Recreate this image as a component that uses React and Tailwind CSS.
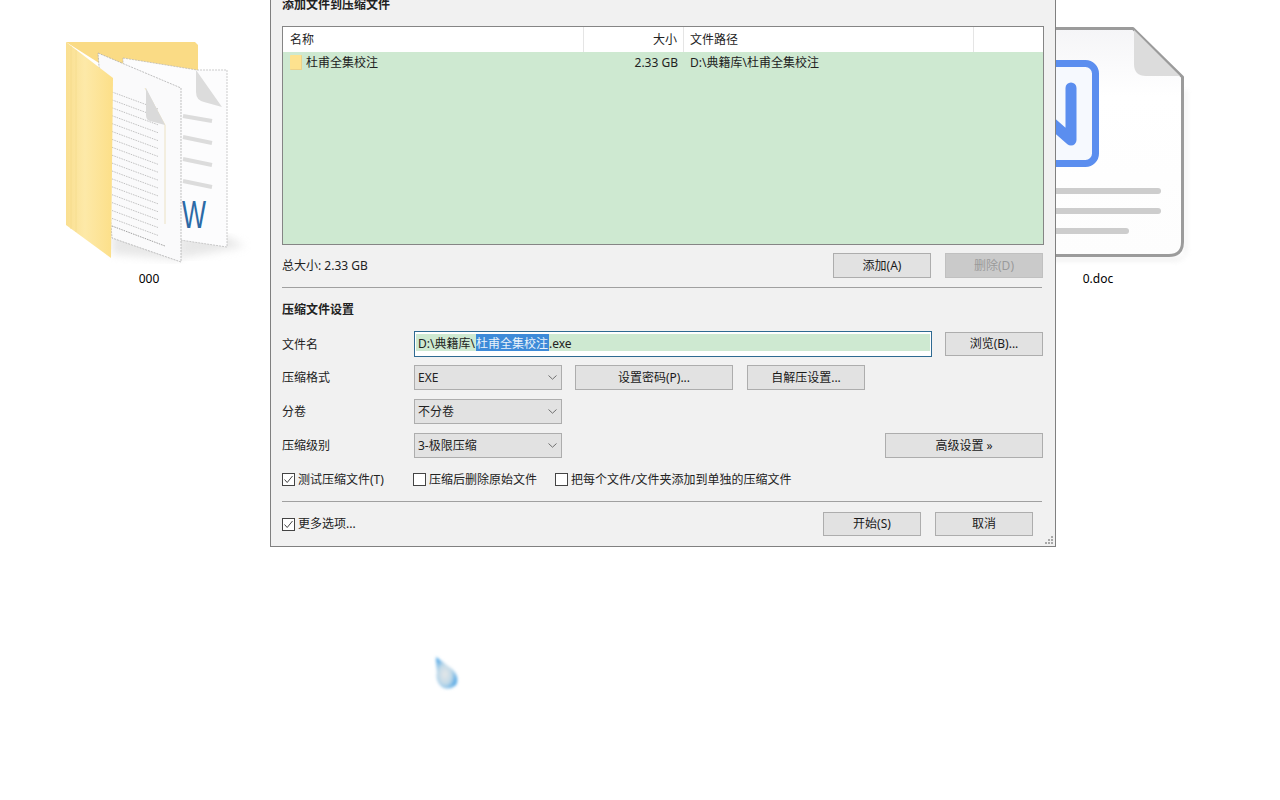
const Btn = ({ children, w, h = "h-[25px]", disabled }) => (
  <div className={`${w} ${h} shrink-0 flex items-center justify-center border ${disabled ? "bg-[#cacaca] border-[#c0c0c0] text-[#9a9a9a]" : "bg-[#e2e2e2] border-[#adadad] text-[#1a1a1a]"}`}>
    {children}
  </div>
);

const Select = ({ children }) => (
  <div className="w-[148px] h-[25px] shrink-0 flex items-center justify-between pl-[3px] pr-[4px] bg-[#e2e2e2] border border-[#adadad]">
    <span>{children}</span>
    <svg width="9" height="5" viewBox="0 0 9 5" fill="none" stroke="#6f6f6f" strokeWidth="1"><path d="M0.5 0.5 L4.500 4.200 L8.500 0.5" /></svg>
  </div>
);

const Check = ({ checked, children, w }) => (
  <div className={`${w} shrink-0 flex items-center gap-[3px]`}>
    <div className="w-[13px] h-[13px] bg-white border border-[#444] flex items-center justify-center">
      {checked && (
        <svg width="11" height="11" viewBox="0 0 11 11" fill="none" stroke="#444" strokeWidth="1"><path d="M1.5 5.5 L4.2 8.5 L9.5 2" /></svg>
      )}
    </div>
    <span>{children}</span>
  </div>
);

const Row = ({ label, mt, children, h = "h-[25px]", labelClass = "" }) => (
  <div className={`flex items-center ${h} ${mt}`}>
    <div className={`w-[132px] shrink-0 ${labelClass}`}>{label}</div>
    {children}
  </div>
);

const FolderIcon = () => (
  <svg className="absolute left-[60px] top-[36px]" width="200" height="240" viewBox="60 36 200 240">
    <defs>
      <linearGradient id="fr" x1="0" y1="0" x2="1" y2="0">
        <stop offset="0" stopColor="#fadf90" />
        <stop offset="0.4" stopColor="#fde9a8" />
        <stop offset="1" stopColor="#fcdf88" />
      </linearGradient>
      <filter id="sh"><feGaussianBlur stdDeviation="4" /></filter>
    </defs>
    <path d="M182 258 L245 246 L225 236 L182 236 Z" fill="#cfcfcf" opacity="0.5" filter="url(#sh)" />
    <path d="M112 254 L181 260 L181 232 L112 228 Z" fill="#c4c4c4" opacity="0.4" filter="url(#sh)" />
    <path d="M66 42 L195 42 L198 45 L198 70 L110 70 Z" fill="#fadb85" />
    <path d="M123 58 L197 70 L227 70 L227 247 L180 240 L123 240 Z" fill="#fcfcfd" stroke="#b5b5b5" strokeWidth="0.7" strokeDasharray="2 1" />
    <path d="M196 70 L222 107 L204 102 Q196 100 196 92 Z" fill="#dcdcdc" />
    <g stroke="#dcdcdc" strokeWidth="4">
      <path d="M183 116 L212 121" /><path d="M183 137 L212 143" /><path d="M183 159 L212 165" /><path d="M183 181 L212 187" />
    </g>
    <text x="182" y="228" fontFamily="Liberation Sans, sans-serif" fontSize="39" textLength="24" lengthAdjust="spacingAndGlyphs" fill="#2c6aa6">W</text>
    <path d="M98 53 L181 88 L181 262 L112 238 Z" fill="#fafafb" stroke="#a5a5a5" strokeWidth="0.7" strokeDasharray="2 1" />
    <g stroke="#a8a8a8" strokeWidth="0.7" strokeDasharray="1.5 1">
      {Array.from({ length: 17 }, (_, i) => (
        <path key={i} d={`M112 ${92 + i * 7.9} L158 ${109 + i * 7.9}`} />
      ))}
      <path d="M112 226 L165 246" stroke="#777" />
    </g>
    <path d="M145 88 L165 125 L165 224" fill="none" stroke="#e8dcb8" strokeWidth="0.8" />
    <path d="M146 88 L165 125 L150 121 Q146 120 146 115 Z" fill="#dadada" />
    <path d="M66 42 L113 78 L111 258 L66 225 Z" fill="url(#fr)" />
    <path d="M71 46 L71 229 M76 50 L76 232" stroke="#f6dc8e" strokeWidth="0.8" />
  </svg>
);

const DocIcon = () => (
  <svg className="absolute left-[1000px] top-[20px]" width="200" height="250" viewBox="1000 20 200 250">
    <defs>
      <linearGradient id="pg" x1="0" y1="0" x2="0" y2="1">
        <stop offset="0" stopColor="#f5f5f7" />
        <stop offset="0.3" stopColor="#ffffff" />
        <stop offset="1" stopColor="#fdfdfd" />
      </linearGradient>
      <filter id="sd"><feGaussianBlur stdDeviation="2.5" /></filter>
    </defs>
    <path d="M1005 261 L1174 261 Q1187 261 1187 248 L1187 90 L1184 90 L1184 257 L1005 257 Z" fill="#d0d0d0" opacity="0.35" filter="url(#sd)" />
    <path d="M1005 28.5 L1133 28.5 L1182.5 77 L1182.5 242 Q1182.5 255.500 1169 255.500 L1005 255.500 Z" fill="url(#pg)" stroke="#9b9b9b" strokeWidth="3" strokeLinejoin="round" />
    <path d="M1134 30 L1180 76 L1146 76 Q1134 76 1134 64 Z" fill="#dcdcdc" />
    <rect x="1010" y="63.500" width="85.500" height="100" rx="10" fill="#f6f9fe" stroke="#5b8eef" strokeWidth="7" />
    <path d="M1071 88 L1071 140 L1030 104" fill="none" stroke="#5b8eef" strokeWidth="11" strokeLinecap="round" strokeLinejoin="round" />
    <g stroke="#cdcdcd" strokeWidth="6" strokeLinecap="round">
      <path d="M1040 191 L1158 191" />
      <path d="M1040 211 L1158 211" />
      <path d="M1040 231 L1126 231" />
    </g>
  </svg>
);

export default function App() {
  return (
    <div className="relative w-[1280px] h-[800px] overflow-hidden bg-white text-[12px] leading-none text-[#222] font-['Noto_Sans','Noto_Sans_CJK_SC',sans-serif]">
      <FolderIcon />
      <DocIcon />
      <div className="absolute left-[100px] w-[98px] top-[273px] text-center text-black">000</div>
      <div className="absolute left-[1049px] w-[98px] top-[273px] text-center text-black">0.doc</div>

      <svg className="absolute left-[428px] top-[650px]" width="40" height="46" viewBox="428 650 40 46">
        <defs>
          <filter id="dr" x="-30%" y="-30%" width="160%" height="160%"><feGaussianBlur stdDeviation="1.4" /></filter>
          <radialGradient id="dg" cx="0.42" cy="0.55" r="0.6">
            <stop offset="0" stopColor="#e4e6e8" />
            <stop offset="0.5" stopColor="#c4dbe8" />
            <stop offset="1" stopColor="#3f9fe4" />
          </radialGradient>
        </defs>
        <path d="M436 657 L452 669 Q460 677 456 685 Q449 691 442 687 Q435 681 437 672 Z" fill="url(#dg)" filter="url(#dr)" />
      </svg>

      <div className="absolute left-[270px] top-[-9px] w-[786px] flex flex-col bg-[#f1f1f1] border border-[#808080] pl-[11px] pr-[11px] pb-[10px]">
        <div className="h-[26px] flex items-center font-bold">添加文件到压缩文件</div>

        <div className="mt-[8px] h-[219px] flex flex-col border border-[#858585]">
          <div className="h-[25px] flex items-center bg-white">
            <div className="w-[301px] h-full pl-[7px] flex items-center border-r border-[#e5e5e5]">名称</div>
            <div className="w-[100px] h-full pr-[6px] flex items-center justify-end border-r border-[#e5e5e5]">大小</div>
            <div className="w-[290px] h-full pl-[6px] flex items-center border-r border-[#e5e5e5]">文件路径</div>
          </div>
          <div className="flex-1 bg-[#cee9d1]">
            <div className="h-[21px] flex items-center">
              <div className="w-[301px] pl-[7px] flex items-center gap-[4px]">
                <div className="w-[12px] h-[15px] bg-[#fde28f] rounded-[1px] border-r border-b border-[#ecd28a]" />
                <span>杜甫全集校注</span>
              </div>
              <div className="w-[100px] pr-[6px] text-right">2.33 GB</div>
              <div className="pl-[6px]">D:\典籍库\杜甫全集校注</div>
            </div>
          </div>
        </div>

        <div className="mt-[8px] h-[25px] flex items-center gap-[14px] pr-[1px]">
          <div className="mr-auto">总大小: 2.33 GB</div>
          <Btn w="w-[98px]">添加(A)</Btn>
          <Btn w="w-[98px]" disabled>删除(D)</Btn>
        </div>

        <div className="mt-[9px] h-px mr-[2px] bg-[#a0a0a0]" />

        <div className="mt-[12px] h-[20px] flex items-center font-bold">压缩文件设置</div>

        <Row label="文件名" mt="mt-[11px]" h="h-[26px]" labelClass="pt-px">
          <div className="w-[518px] h-[26px] shrink-0 border border-[#2f6a92] bg-white pt-[2px] pl-[1px] pr-[1px] mr-[13px]">
            <div className="h-[17px] bg-[#cee9d1] flex items-center pl-[2px] whitespace-nowrap">
              <span className="h-[17px] flex items-center pt-[2px]">D:\典籍库\</span>
              <span className="ml-px pr-px pt-[2px] bg-[#3d8ad8] text-[#e8f2fb] h-[17px] flex items-center">杜甫全集校注</span>
              <span className="h-[17px] flex items-center pt-[2px]">.exe</span>
            </div>
          </div>
          <Btn w="w-[98px]" h="h-[24px]">浏览(B)...</Btn>
        </Row>

        <Row label="压缩格式" mt="mt-[8px]">
          <Select>EXE</Select>
          <div className="ml-[13px]"><Btn w="w-[158px]">设置密码(P)...</Btn></div>
          <div className="ml-[14px]"><Btn w="w-[118px]">自解压设置...</Btn></div>
        </Row>

        <Row label="分卷" mt="mt-[9px]">
          <Select>不分卷</Select>
        </Row>

        <Row label="压缩级别" mt="mt-[9px]">
          <Select>3-极限压缩</Select>
          <div className="ml-auto mr-[1px]"><Btn w="w-[158px]">高级设置 »</Btn></div>
        </Row>

        <div className="mt-[11px] h-[21px] flex items-center">
          <Check checked w="w-[131px]">测试压缩文件(T)</Check>
          <Check w="w-[142px]">压缩后删除原始文件</Check>
          <Check>把每个文件/文件夹添加到单独的压缩文件</Check>
        </div>

        <div className="mt-[11px] h-px mr-[2px] bg-[#a0a0a0]" />

        <div className="mt-[10px] h-[24px] flex items-center gap-[14px] pr-[11px]">
          <div className="mr-auto"><Check checked>更多选项...</Check></div>
          <Btn w="w-[98px]" h="h-[24px]">开始(S)</Btn>
          <Btn w="w-[98px]" h="h-[24px]">取消</Btn>
        </div>

        <svg className="absolute right-[1px] bottom-[1px]" width="10" height="10" viewBox="0 0 10 10" fill="#a8a8a8">
          <rect x="7" y="1" width="2" height="2" />
          <rect x="4" y="4" width="2" height="2" /><rect x="7" y="4" width="2" height="2" />
          <rect x="1" y="7" width="2" height="2" /><rect x="4" y="7" width="2" height="2" /><rect x="7" y="7" width="2" height="2" />
        </svg>
      </div>
    </div>
  );
}
